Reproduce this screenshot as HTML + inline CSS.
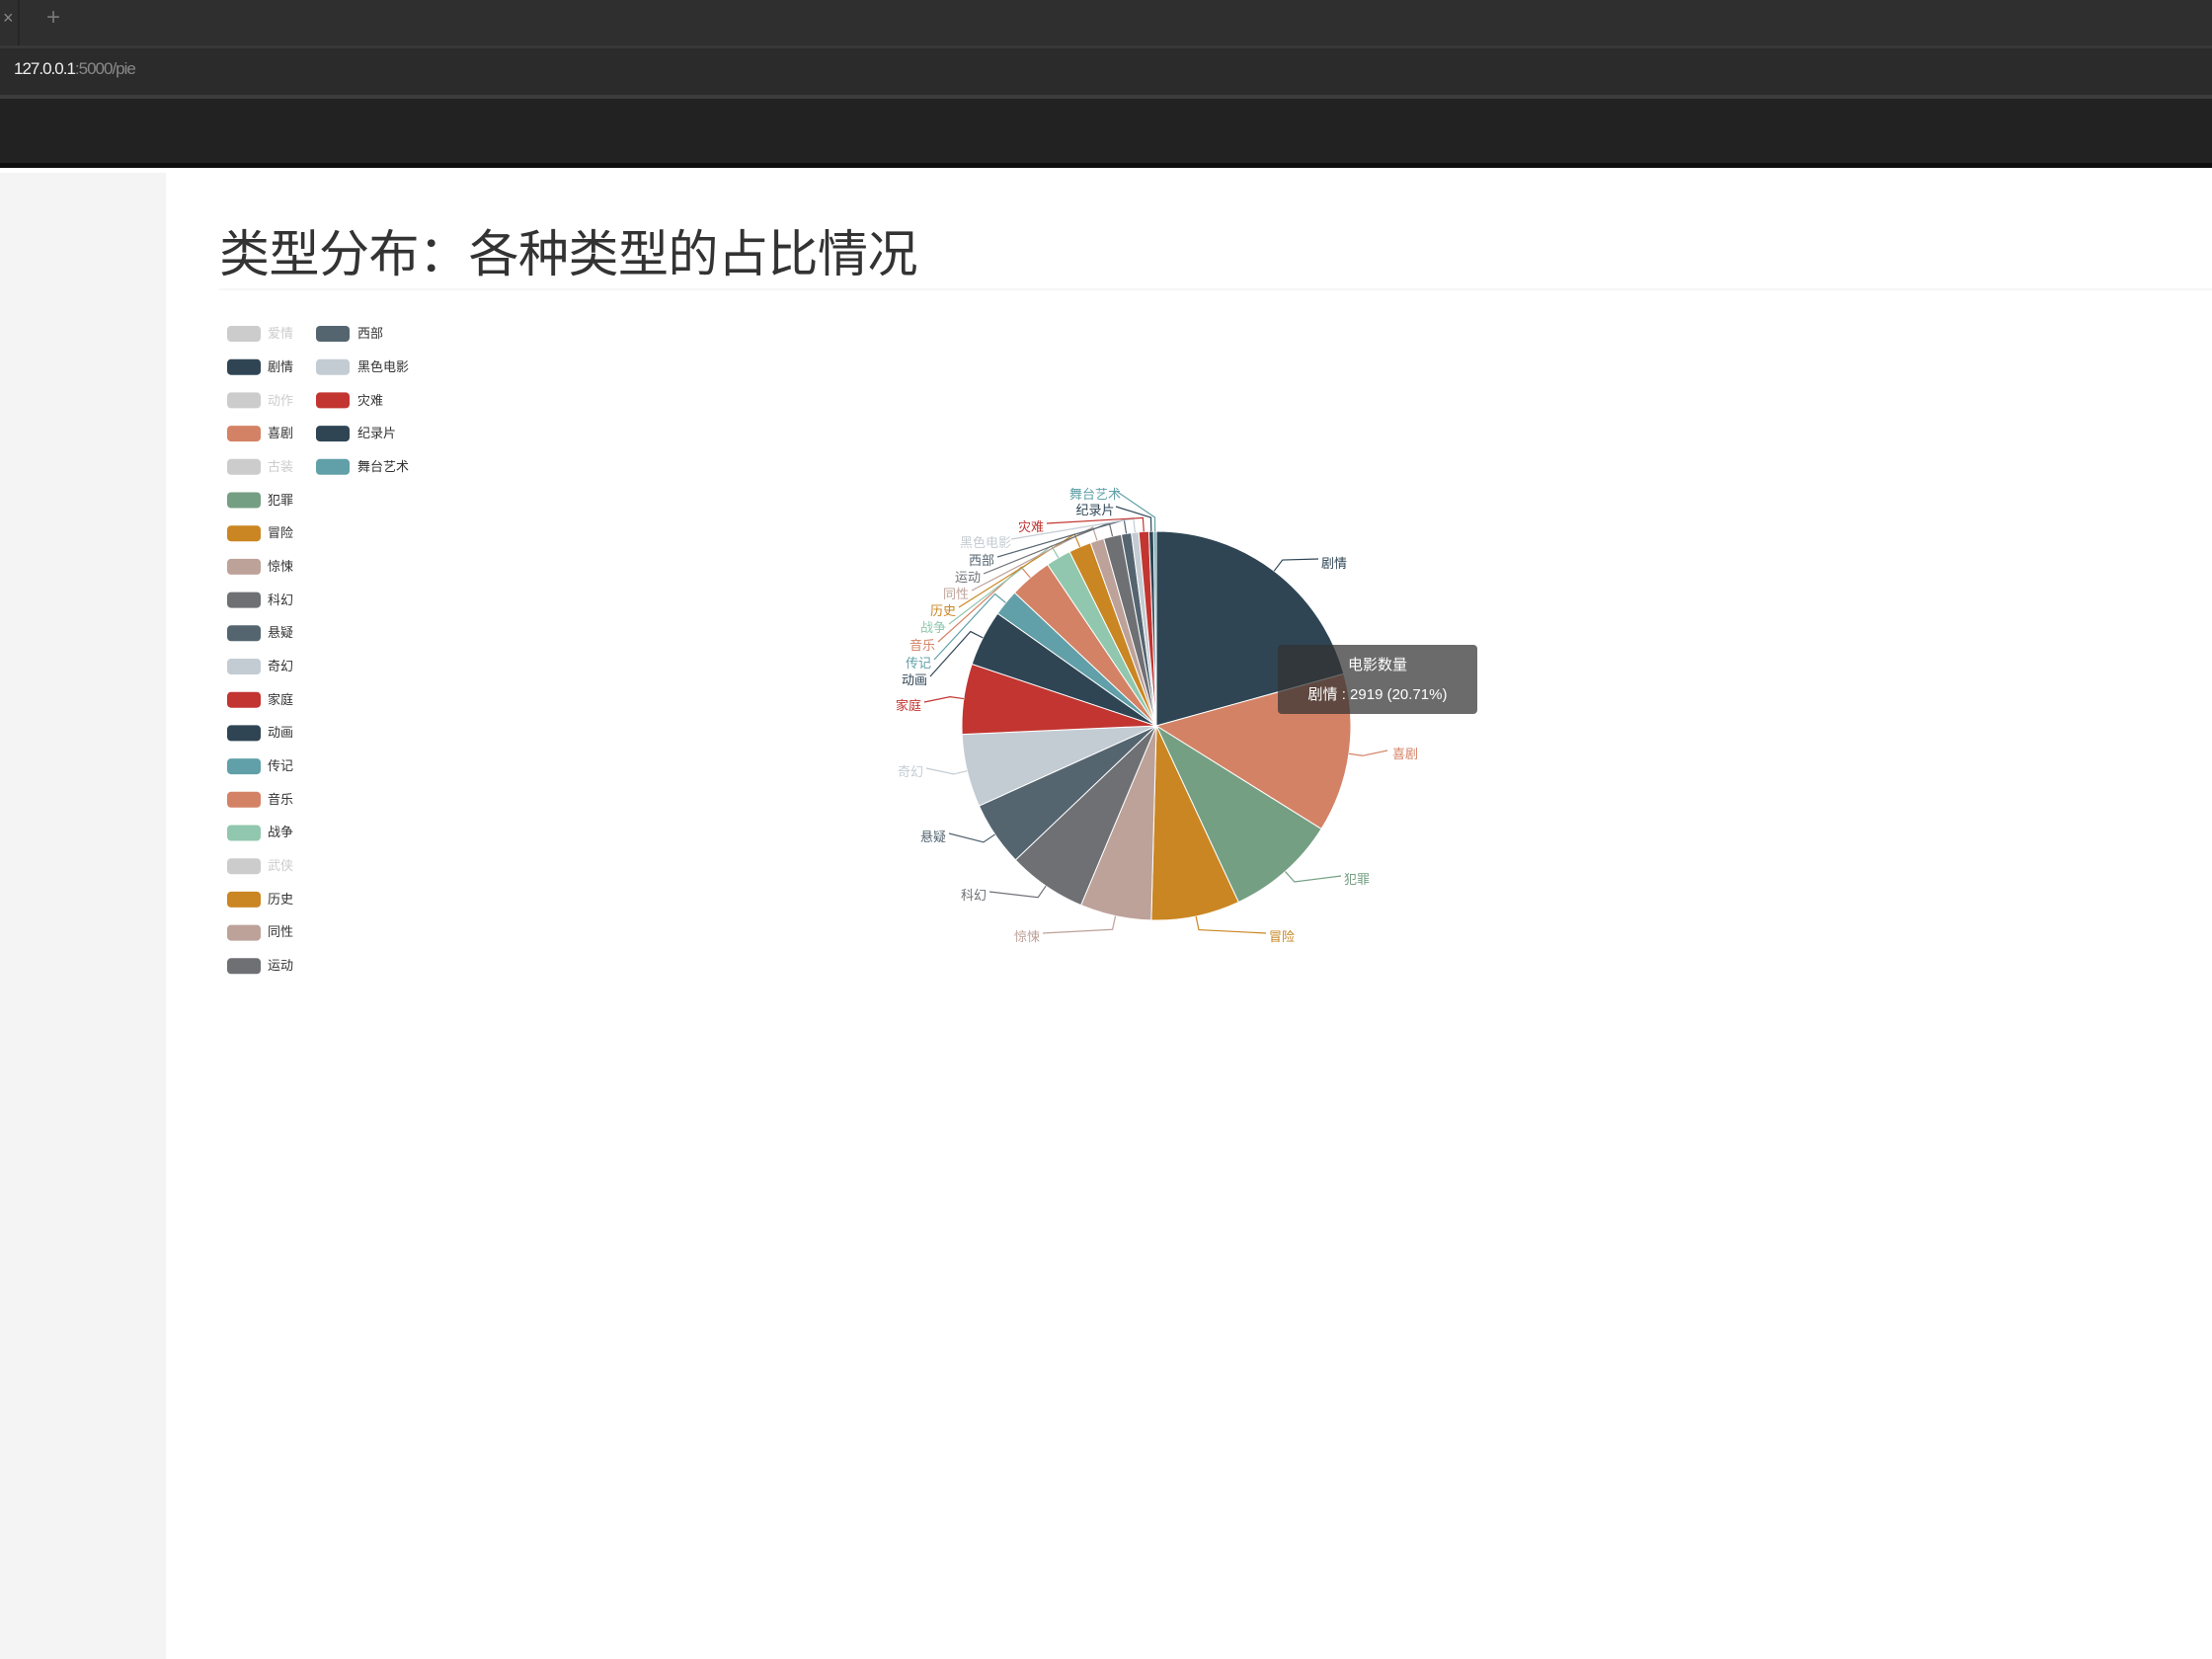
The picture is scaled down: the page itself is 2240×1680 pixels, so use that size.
<!DOCTYPE html>
<html><head><meta charset="utf-8"><style>
*{margin:0;padding:0;box-sizing:border-box}
body{width:2240px;height:1680px;background:#fff;position:relative;overflow:hidden;font-family:"Liberation Sans","Noto Sans CJK SC",sans-serif}
.tab{position:absolute;left:0;top:0;width:2240px;height:46px;background:#2f2f2f}
.url{position:absolute;left:0;top:46px;width:2240px;height:54px;background:#2b2b2b;border-top:3px solid #383838;border-bottom:4px solid #3c3c3c}
.tool{position:absolute;left:0;top:100px;width:2240px;height:70px;background:#222;border-bottom:5px solid #0e0e0e}
.side{position:absolute;left:0;top:175px;width:168px;height:1505px;background:#f4f4f4}
h1{position:absolute;left:222px;top:216px;font-size:51px;font-weight:normal;color:#333;font-family:"Liberation Sans","Noto Sans CJK SC",sans-serif;letter-spacing:-0.5px}
.hl{position:absolute;left:222px;top:292px;width:2018px;height:2px;background:#f6f6f6}
</style></head><body>
<div class="tab"><span style="position:absolute;left:3px;top:8px;color:#888;font-size:18px">×</span><span style="position:absolute;left:47px;top:4px;color:#777;font-size:24px">+</span><div style="position:absolute;left:18px;top:0;width:2px;height:46px;background:#262626"></div></div>
<div class="url"><span style="position:absolute;left:14px;top:11px;font-size:17px;color:#eee;letter-spacing:-1px">127.0.0.1<span style="color:#888">:5000/pie</span></span></div>
<div class="tool"></div>
<div class="side"></div>
<h1>类型分布：各种类型的占比情况</h1>
<div class="hl"></div>
<svg id="c" width="2240" height="1680" style="position:absolute;left:0;top:0" font-family="Liberation Sans, Noto Sans CJK SC, sans-serif" font-size="13">
<g id="pie"></g>
<g id="legend"></g>
<g text-anchor="middle" font-size="13">
<text x="1351" y="575" fill="#2f4554">剧情</text>
<text x="1423" y="768" fill="#d48265">喜剧</text>
<text x="1374" y="895" fill="#749f83">犯罪</text>
<text x="1298" y="953" fill="#ca8622">冒险</text>
<text x="1040" y="953" fill="#bda29a">惊悚</text>
<text x="986" y="911" fill="#6e7074">科幻</text>
<text x="945" y="852" fill="#546570">悬疑</text>
<text x="922" y="786" fill="#c4ccd3">奇幻</text>
<text x="920" y="719" fill="#c23531">家庭</text>
<text x="926" y="693" fill="#2f4554">动画</text>
<text x="930" y="676" fill="#61a0a8">传记</text>
<text x="934" y="658" fill="#d48265">音乐</text>
<text x="945" y="640" fill="#91c7ae">战争</text>
<text x="955" y="623" fill="#ca8622">历史</text>
<text x="968" y="606" fill="#bda29a">同性</text>
<text x="980" y="589" fill="#6e7074">运动</text>
<text x="994" y="572" fill="#546570">西部</text>
<text x="998" y="554" fill="#c4ccd3">黑色电影</text>
<text x="1044" y="538" fill="#c23531">灾难</text>
<text x="1109" y="521" fill="#2f4554">纪录片</text>
<text x="1109" y="505" fill="#61a0a8">舞台艺术</text>
</g>
<g font-size="13">
<text x="271" y="342" fill="#ccc">爱情</text>
<text x="271" y="376" fill="#333">剧情</text>
<text x="271" y="410" fill="#ccc">动作</text>
<text x="271" y="443" fill="#333">喜剧</text>
<text x="271" y="477" fill="#ccc">古装</text>
<text x="271" y="511" fill="#333">犯罪</text>
<text x="271" y="544" fill="#333">冒险</text>
<text x="271" y="578" fill="#333">惊悚</text>
<text x="271" y="612" fill="#333">科幻</text>
<text x="271" y="645" fill="#333">悬疑</text>
<text x="271" y="679" fill="#333">奇幻</text>
<text x="271" y="713" fill="#333">家庭</text>
<text x="271" y="746" fill="#333">动画</text>
<text x="271" y="780" fill="#333">传记</text>
<text x="271" y="814" fill="#333">音乐</text>
<text x="271" y="847" fill="#333">战争</text>
<text x="271" y="881" fill="#ccc">武侠</text>
<text x="271" y="915" fill="#333">历史</text>
<text x="271" y="948" fill="#333">同性</text>
<text x="271" y="982" fill="#333">运动</text>
<text x="362" y="342" fill="#333">西部</text>
<text x="362" y="376" fill="#333">黑色电影</text>
<text x="362" y="410" fill="#333">灾难</text>
<text x="362" y="443" fill="#333">纪录片</text>
<text x="362" y="477" fill="#333">舞台艺术</text>
</g>
<g>
<rect x="1294" y="653" width="202" height="70" rx="4" fill="rgba(50,50,50,0.72)"/>
<text x="1395" y="678" fill="#fff" font-size="15" text-anchor="middle">电影数量</text>
<text x="1395" y="708" fill="#fff" font-size="15" text-anchor="middle">剧情 : 2919 (20.71%)</text>
</g>
</svg>
<script>
var cx=1171,cy=735,r=197;
var ends=[74.5,122,155,181.5,202.8,226.4,245.7,267.5,288.5,305.3,313.2,326,333.5,340.2,344.3,349.6,352.6,354.8,357.8,359.2,360];
var cols=['#2f4554','#d48265','#749f83','#ca8622','#bda29a','#6e7074','#546570','#c4ccd3','#c23531','#2f4554','#61a0a8','#d48265','#91c7ae','#ca8622','#bda29a','#6e7074','#546570','#c4ccd3','#c23531','#2f4554','#61a0a8'];
var lab=[[1335,570],[1405,764],[1358,891],[1282,949],[1056,949],[1002,907],[961,848],[938,782],[936,715],[942,689],[946,672],[950,654],[961,636],[971,619],[984,602],[996,585],[1010,568],[1024,550],[1060,534],[1130,517],[1130,501]];
function pt(a,rr){var t=(a-90)*Math.PI/180;return [cx+rr*Math.cos(t),cy+rr*Math.sin(t)];}
var s='',st=0;
for(var i=0;i<ends.length;i++){var e=ends[i];var p1=pt(st,r),p2=pt(e,r);var lg=(e-st)>180?1:0;
s+='<path d="M'+cx+','+cy+'L'+p1[0]+','+p1[1]+'A'+r+','+r+' 0 '+lg+' 1 '+p2[0]+','+p2[1]+'Z" fill="'+cols[i]+'" stroke="#fff" stroke-width="1"/>';
var m=(st+e)/2,a=pt(m,r),b=pt(m,r+14);var L=lab[i];
s+='<polyline points="'+a[0]+','+a[1]+' '+b[0]+','+b[1]+' '+L[0]+','+(L[1]-4)+'" fill="none" stroke="'+cols[i]+'" stroke-width="1.2"/>';
st=e;}
document.getElementById('pie').innerHTML=s;
var lc=['#ccc','#2f4554','#ccc','#d48265','#ccc','#749f83','#ca8622','#bda29a','#6e7074','#546570','#c4ccd3','#c23531','#2f4554','#61a0a8','#d48265','#91c7ae','#ccc','#ca8622','#bda29a','#6e7074'];
var lc2=['#546570','#c4ccd3','#c23531','#2f4554','#61a0a8'];var g='';
for(var i=0;i<lc.length;i++){g+='<rect x="230" y="'+(330+i*33.7)+'" width="34" height="16" rx="4" fill="'+lc[i]+'"/>';}
for(var i=0;i<lc2.length;i++){g+='<rect x="320" y="'+(330+i*33.7)+'" width="34" height="16" rx="4" fill="'+lc2[i]+'"/>';}
document.getElementById('legend').innerHTML=g;
</script>
</body></html>
